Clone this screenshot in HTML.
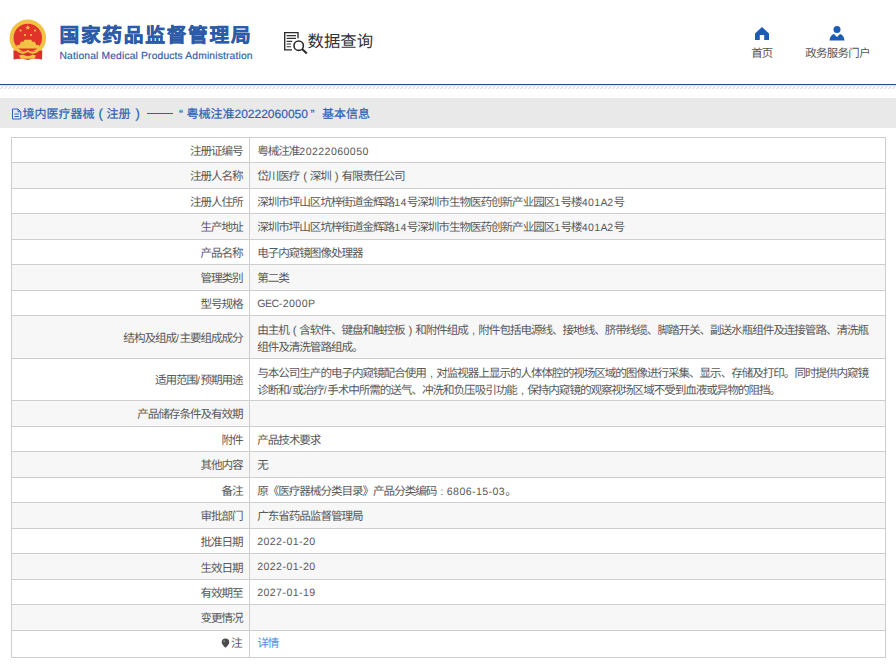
<!DOCTYPE html>
<html lang="zh-CN">
<head>
<meta charset="utf-8">
<style>
html,body{margin:0;padding:0;background:#fff;width:896px;height:665px;overflow:hidden;font-family:"Liberation Sans",sans-serif;text-rendering:geometricPrecision;}
.a{position:absolute;}
.hl{height:1px;background:#cecece;}
.vl{width:1px;background:#cecece;}
.t{font-size:11.6px;letter-spacing:-1.06px;line-height:17px;color:#595959;white-space:nowrap;}
.n{font-size:10.6px;letter-spacing:0.42px;}
.u{letter-spacing:-0.45px;}
.lab{text-align:right;}
.fc{display:inline-block;width:10.5px;text-align:center;font-size:11px;line-height:10px;}
.fp{display:inline-block;width:10.5px;text-align:center;font-size:11.5px;line-height:10px;vertical-align:0px;}
.link{color:#4a8fdf;}
.pin{display:inline-block;width:7px;height:8px;margin-right:1px;vertical-align:-0.5px;background:radial-gradient(circle at 50% 40%,#555 0,#555 2.8px,transparent 3.2px);}
#bl{left:0;top:84px;width:896px;height:1px;background:#26507e;}
#bl2{left:0;top:85px;width:896px;height:1px;background:#cfe6f2;}
#hatch{left:0;top:86px;width:896px;height:3px;background:repeating-linear-gradient(135deg,#fff 0,#fff 1.7px,#e4e4e4 1.7px,#e4e4e4 2.83px);}
#bar{left:0;top:98px;width:896px;height:30px;background:#e9e9e9;}
.ttl{font-size:12px;line-height:16px;color:#2c61b5;-webkit-text-stroke:0.2px #2c61b5;white-space:nowrap;top:106px;}
</style>
</head>
<body>
<svg class="a" style="left:0px;top:0px" width="60" height="70" viewBox="0 0 60 70">
  <circle cx="27.8" cy="37.9" r="18.3" fill="#f2c244"/>
  <circle cx="27.8" cy="37.9" r="14.2" fill="#e0342b"/>
  <path d="M16.6 48.5 L39.2 48.5 L39.2 45 L16.6 45 Z M19.5 45 L36.2 45 L34.8 41.8 L20.9 41.8 Z M23.5 41.8 L32.1 41.8 L31.3 39.8 L24.3 39.8 Z" fill="#f2c244"/>
  <path d="M27.8 25.1 L28.5 26.8 L30.2 26.9 L28.9 28 L29.3 29.7 L27.8 28.8 L26.3 29.7 L26.7 28 L25.4 26.9 L27.1 26.8 Z" fill="#f2c244"/>
  <circle cx="20.6" cy="30.6" r="1.1" fill="#f2c244"/>
  <circle cx="35" cy="30.6" r="1.1" fill="#f2c244"/>
  <circle cx="24.9" cy="35" r="1.1" fill="#f2c244"/>
  <circle cx="31.1" cy="35" r="1.1" fill="#f2c244"/>
  <path d="M13.4 50.2 Q27.8 53.5 42.3 50.2 L42 59.5 Q35 57.8 27.8 60 Q20.6 57.8 13.6 59.5 Z" fill="#d9302c"/>
  <path d="M17 50.5 Q22 55 27.8 51 Q33.6 55 38.6 50.5" stroke="#f2c244" stroke-width="1.6" fill="none"/>
  <path d="M18.8 55.5 L23 54.5 Q27.8 57.5 32.6 54.5 L36 55.5 L34.5 58.8 L21 58.8 Z" fill="#f2c244"/>
</svg>
<div class="a" style="left:59.5px;top:23.6px;font-size:19.7px;line-height:24px;letter-spacing:1.75px;font-weight:900;color:#2c5ba9;-webkit-text-stroke:0.45px #2c5ba9;white-space:nowrap;">国家药品监督管理局</div>
<div class="a" style="left:59.5px;top:51px;font-size:10.3px;line-height:12px;letter-spacing:0.15px;color:#2f5ca8;-webkit-text-stroke:0.15px #2f5ca8;white-space:nowrap;">National Medical Products Administration</div>
<svg class="a" style="left:280px;top:28px" width="32" height="28" viewBox="0 0 32 28">
  <path d="M18 10.3 V4.6 H4.7 V21.9 H12" stroke="#2a2a2a" stroke-width="1.35" fill="none"/>
  <path d="M6.6 7.6 H16 M6.6 10.3 H16 M6.6 13.3 H12.2 M6.6 16 H11 M6.6 18.7 H11" stroke="#333" stroke-width="1.15"/>
  <circle cx="18.7" cy="17.7" r="4.7" stroke="#2a2a2a" stroke-width="1.6" fill="none"/>
  <path d="M22.1 21.1 L26.8 25.4" stroke="#2a2a2a" stroke-width="2.1"/>
</svg>
<div class="a" style="left:307.5px;top:31.8px;font-size:16.4px;line-height:20px;color:#333;white-space:nowrap;">数据查询</div>
<svg class="a" style="left:754px;top:26px" width="16" height="15" viewBox="0 0 16 15">
  <path d="M8 1 L15 7.5 V14 H10.2 V9 H5.8 V14 H1 V7.5 Z" fill="#1c5cb5"/>
</svg>
<div class="a" style="left:751.2px;top:47.8px;font-size:11.4px;letter-spacing:-0.95px;line-height:13px;color:#555;white-space:nowrap;">首页</div>
<svg class="a" style="left:829px;top:25px" width="16" height="16" viewBox="0 0 16 16">
  <circle cx="8" cy="4.5" r="3.5" fill="#1c5cb5"/>
  <path d="M0.5 15.5 Q1 10 5 9 L8 12 L11 9 Q15 10 15.5 15.5 Z" fill="#1c5cb5"/>
</svg>
<div class="a" style="left:805.2px;top:47.8px;font-size:11.4px;letter-spacing:-0.6px;line-height:13px;color:#555;white-space:nowrap;">政务服务门户</div>
<div id="bl" class="a"></div>
<div id="bl2" class="a"></div>
<div id="hatch" class="a"></div>
<div id="bar" class="a"></div>
<svg class="a" style="left:11px;top:108px" width="11" height="12" viewBox="0 0 11 12">
  <path d="M1.5 1 H7 L9.8 3.8 V11 H1.5 Z M7 1 V3.8 H9.8 M3.5 6 H7.8 M3.5 8.5 H7.8" stroke="#2c63b8" stroke-width="1" fill="none"/>
</svg>
<div class="a ttl" style="left:22.5px">境内医疗器械</div>
<div class="a ttl" style="left:98.5px;font-size:13px">(</div>
<div class="a ttl" style="left:106.5px">注册</div>
<div class="a ttl" style="left:135.5px;font-size:13px">)</div>
<div class="a ttl" style="left:146.5px"><span style="display:inline-block;width:26px;height:1px;background:#2c63b8;vertical-align:4px"></span></div>
<div class="a ttl" style="left:179px">&#8220;</div>
<div class="a ttl" style="left:186.5px">粤械注准20222060050</div>
<div class="a ttl" style="left:310.5px">&#8221;</div>
<div class="a ttl" style="left:322px">基本信息</div>
<div class="a" style="left:11px;top:137px;width:874px;height:25px;background:#ffffff"></div>
<div class="a" style="left:11px;top:162px;width:874px;height:26px;background:#f7f7f7"></div>
<div class="a" style="left:11px;top:188px;width:874px;height:25px;background:#ffffff"></div>
<div class="a" style="left:11px;top:213px;width:874px;height:26px;background:#f7f7f7"></div>
<div class="a" style="left:11px;top:239px;width:874px;height:25px;background:#ffffff"></div>
<div class="a" style="left:11px;top:264px;width:874px;height:26px;background:#f7f7f7"></div>
<div class="a" style="left:11px;top:290px;width:874px;height:25px;background:#ffffff"></div>
<div class="a" style="left:11px;top:315px;width:874px;height:43px;background:#f7f7f7"></div>
<div class="a" style="left:11px;top:358px;width:874px;height:42px;background:#ffffff"></div>
<div class="a" style="left:11px;top:400px;width:874px;height:26px;background:#f7f7f7"></div>
<div class="a" style="left:11px;top:426px;width:874px;height:25px;background:#ffffff"></div>
<div class="a" style="left:11px;top:451px;width:874px;height:26px;background:#f7f7f7"></div>
<div class="a" style="left:11px;top:477px;width:874px;height:25px;background:#ffffff"></div>
<div class="a" style="left:11px;top:502px;width:874px;height:26px;background:#f7f7f7"></div>
<div class="a" style="left:11px;top:528px;width:874px;height:25px;background:#ffffff"></div>
<div class="a" style="left:11px;top:553px;width:874px;height:26px;background:#f7f7f7"></div>
<div class="a" style="left:11px;top:579px;width:874px;height:25px;background:#ffffff"></div>
<div class="a" style="left:11px;top:604px;width:874px;height:26px;background:#f7f7f7"></div>
<div class="a" style="left:11px;top:630px;width:874px;height:27px;background:#ffffff"></div>
<div class="a hl" style="left:11px;top:137px;width:875px"></div>
<div class="a hl" style="left:11px;top:162px;width:875px"></div>
<div class="a hl" style="left:11px;top:188px;width:875px"></div>
<div class="a hl" style="left:11px;top:213px;width:875px"></div>
<div class="a hl" style="left:11px;top:239px;width:875px"></div>
<div class="a hl" style="left:11px;top:264px;width:875px"></div>
<div class="a hl" style="left:11px;top:290px;width:875px"></div>
<div class="a hl" style="left:11px;top:315px;width:875px"></div>
<div class="a hl" style="left:11px;top:358px;width:875px"></div>
<div class="a hl" style="left:11px;top:400px;width:875px"></div>
<div class="a hl" style="left:11px;top:426px;width:875px"></div>
<div class="a hl" style="left:11px;top:451px;width:875px"></div>
<div class="a hl" style="left:11px;top:477px;width:875px"></div>
<div class="a hl" style="left:11px;top:502px;width:875px"></div>
<div class="a hl" style="left:11px;top:528px;width:875px"></div>
<div class="a hl" style="left:11px;top:553px;width:875px"></div>
<div class="a hl" style="left:11px;top:579px;width:875px"></div>
<div class="a hl" style="left:11px;top:604px;width:875px"></div>
<div class="a hl" style="left:11px;top:630px;width:875px"></div>
<div class="a hl" style="left:11px;top:657px;width:875px"></div>
<div class="a vl" style="left:11px;top:137px;height:521px"></div>
<div class="a vl" style="left:249px;top:137px;height:521px"></div>
<div class="a vl" style="left:885px;top:137px;height:521px"></div>
<div class="a t lab" style="right:653.4px;top:143px">注册证编号</div>
<div class="a t val" style="left:257.2px;top:143px">粤械注准<span class="n">20222060050</span></div>
<div class="a t lab" style="right:653.4px;top:168px">注册人名称</div>
<div class="a t val" style="left:257.2px;top:168px">岱川医疗<span class="fp">(</span>深圳<span class="fp">)</span>有限责任公司</div>
<div class="a t lab" style="right:653.4px;top:194px">注册人住所</div>
<div class="a t val" style="left:257.2px;top:194px">深圳市坪山区坑梓街道金辉路<span class="n">14</span>号深圳市生物医药创新产业园区<span class="n">1</span>号楼<span class="n">401<span class="u">A</span>2</span>号</div>
<div class="a t lab" style="right:653.4px;top:219px">生产地址</div>
<div class="a t val" style="left:257.2px;top:219px">深圳市坪山区坑梓街道金辉路<span class="n">14</span>号深圳市生物医药创新产业园区<span class="n">1</span>号楼<span class="n">401<span class="u">A</span>2</span>号</div>
<div class="a t lab" style="right:653.4px;top:245px">产品名称</div>
<div class="a t val" style="left:257.2px;top:245px">电子内窥镜图像处理器</div>
<div class="a t lab" style="right:653.4px;top:270px">管理类别</div>
<div class="a t val" style="left:257.2px;top:270px">第二类</div>
<div class="a t lab" style="right:653.4px;top:296px">型号规格</div>
<div class="a t val" style="left:257.2px;top:295px"><span class="n"><span class="u">GEC</span>-2000<span class="u">P</span></span></div>
<div class="a t lab" style="right:653.4px;top:330px">结构及组成<span class="n">/</span>主要组成成分</div>
<div class="a t val" style="left:257.2px;top:322px">由主机<span class="fp">(</span>含软件、键盘和触控板<span class="fp">)</span>和附件组成<span class="fc">,</span>附件包括电源线、接地线、脐带线缆、脚踏开关、副送水瓶组件及连接管路、清洗瓶<br>组件及清洗管路组成。</div>
<div class="a t lab" style="right:653.4px;top:372px">适用范围<span class="n">/</span>预期用途</div>
<div class="a t val" style="left:257.2px;top:365px">与本公司生产的电子内窥镜配合使用<span class="fc">,</span>对监视器上显示的人体体腔的视场区域的图像进行采集、显示、存储及打印。同时提供内窥镜<br>诊断和<span class="n">/</span>或治疗<span class="n">/</span>手术中所需的送气、冲洗和负压吸引功能<span class="fc">,</span>保持内窥镜的观察视场区域不受到血液或异物的阻挡。</div>
<div class="a t lab" style="right:653.4px;top:406px">产品储存条件及有效期</div>
<div class="a t lab" style="right:653.4px;top:432px">附件</div>
<div class="a t val" style="left:257.2px;top:432px">产品技术要求</div>
<div class="a t lab" style="right:653.4px;top:457px">其他内容</div>
<div class="a t val" style="left:257.2px;top:457px">无</div>
<div class="a t lab" style="right:653.4px;top:483px">备注</div>
<div class="a t val" style="left:257.2px;top:483px">原《医疗器械分类目录》产品分类编码<span class="fp" style="font-size:10.6px">:</span><span class="n">6806-15-03</span>。</div>
<div class="a t lab" style="right:653.4px;top:508px">审批部门</div>
<div class="a t val" style="left:257.2px;top:508px">广东省药品监督管理局</div>
<div class="a t lab" style="right:653.4px;top:534px">批准日期</div>
<div class="a t val" style="left:257.2px;top:533px"><span class="n">2022-01-20</span></div>
<div class="a t lab" style="right:653.4px;top:560px">生效日期</div>
<div class="a t val" style="left:257.2px;top:558px"><span class="n">2022-01-20</span></div>
<div class="a t lab" style="right:653.4px;top:585px">有效期至</div>
<div class="a t val" style="left:257.2px;top:584px"><span class="n">2027-01-19</span></div>
<div class="a t lab" style="right:653.4px;top:610px">变更情况</div>
<div class="a t lab" style="right:654.4px;top:635px"><svg width="9" height="10" viewBox="0 0 9 10" style="vertical-align:-1px;margin-right:1.5px"><path d="M4.5 0.6 C6.9 0.6 8.3 2.3 8.3 4.3 C8.3 6.3 6.2 7.6 5 9.6 L4 9.6 C2.8 7.6 0.7 6.3 0.7 4.3 C0.7 2.3 2.1 0.6 4.5 0.6 Z" fill="#4a4a4a"/><circle cx="3.2" cy="3.2" r="1" fill="#8a8a8a"/></svg>注</div>
<div class="a t val link" style="left:257.2px;top:635px">详情</div>
</body>
</html>
